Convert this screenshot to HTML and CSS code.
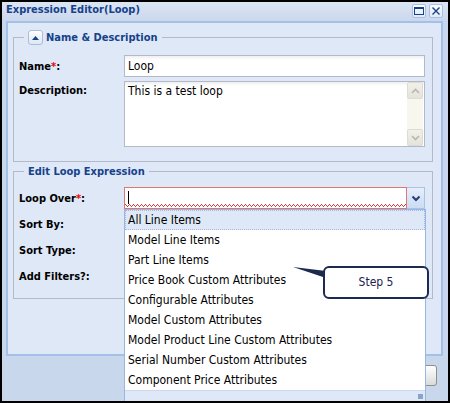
FILE: index.html
```html
<!DOCTYPE html>
<html>
<head>
<meta charset="utf-8">
<link rel="stylesheet" href="styles.css">
</head>
<body>
<div class="win">
  <div class="titlebar">
    <span class="title">Expression Editor(Loop)</span>
    <div class="tools">
      <span class="tool"><svg width="12" height="12" viewBox="0 0 12 12"><rect x="1.5" y="2.5" width="9" height="7" fill="none" stroke="#15428b" stroke-width="1"/><rect x="1" y="2" width="10" height="2" fill="#15428b"/></svg></span>
      <span class="tool"><svg width="12" height="12" viewBox="0 0 12 12"><path d="M2.5 2.5 L9.5 9.5 M9.5 2.5 L2.5 9.5" stroke="#15428b" stroke-width="1.4" fill="none"/></svg></span>
    </div>
  </div>
  <div class="body">
    <fieldset class="fs fs-name">
      <legend class="lg"><span class="collapse"><svg width="9" height="6" viewBox="0 0 9 6"><path d="M4.5 1 L8 5 L1 5 Z" fill="#15428b"/></svg></span><span>Name &amp; Description</span></legend>
      <div class="row">
        <span class="lbl">Name<span class="req">*</span>:</span>
        <div class="input">Loop</div>
      </div>
      <div class="row row-top">
        <span class="lbl lbl-top">Description:</span>
        <div class="textarea">
          <div class="ta-text">This is a test loop</div>
          <div class="sb">
            <span class="sb-btn"><svg width="9" height="6" viewBox="0 0 9 6"><path d="M1 5 L4.5 1.5 L8 5" stroke="#b8b8ae" stroke-width="1.6" fill="none"/></svg></span>
            <span class="sb-btn"><svg width="9" height="6" viewBox="0 0 9 6"><path d="M1 1 L4.5 4.5 L8 1" stroke="#b8b8ae" stroke-width="1.6" fill="none"/></svg></span>
          </div>
        </div>
      </div>
    </fieldset>
    <fieldset class="fs fs-loop">
      <legend class="lg lg-plain">Edit Loop Expression</legend>
      <div class="row">
        <span class="lbl">Loop Over<span class="req">*</span>:</span>
        <div class="combo">
          <div class="combo-input"><span class="caret"></span></div>
          <div class="trigger"><svg width="10" height="7" viewBox="0 0 10 7"><path d="M1.5 1.5 L5 5 L8.5 1.5" stroke="#243f78" stroke-width="2" fill="none"/></svg></div>
          <div class="list">
            <div class="item item-sel">All Line Items</div>
            <div class="item">Model Line Items</div>
            <div class="item">Part Line Items</div>
            <div class="item">Price Book Custom Attributes</div>
            <div class="item">Configurable Attributes</div>
            <div class="item">Model Custom Attributes</div>
            <div class="item">Model Product Line Custom Attributes</div>
            <div class="item">Serial Number Custom Attributes</div>
            <div class="item">Component Price Attributes</div>
            <div class="list-foot"><span class="grip"></span></div>
          </div>
        </div>
      </div>
      <div class="row"><span class="lbl">Sort By:</span></div>
      <div class="row"><span class="lbl">Sort Type:</span></div>
      <div class="row"><span class="lbl">Add Filters?:</span></div>
    </fieldset>
  </div>
  <div class="footer">
    <span class="btn">OK</span>
  </div>
  <svg class="tail" width="34" height="14" viewBox="0 0 34 14"><polygon points="0,1 33,5 33,12" fill="#1d2a50"/></svg>
  <div class="callout">Step 5</div>
</div>
</body>
</html>
```
FILE: styles.css
```css
html, body {
  margin: 0;
  padding: 0;
  background: #fff;
}
body {
  font-family: "DejaVu Sans Condensed", "DejaVu Sans", sans-serif;
  font-stretch: condensed;
  font-size: 12px;
}
.win {
  position: relative;
  box-sizing: border-box;
  width: 450px;
  height: 403px;
  border: 2px solid #000;
  background: #c8d7ec;
  overflow: hidden;
  display: flex;
  flex-direction: column;
}
.titlebar {
  height: 19px;
  flex: none;
  display: flex;
  align-items: flex-start;
  justify-content: space-between;
  padding: 0 5px 0 4px;
  background: linear-gradient(#dbe5f4, #cbd8ec);
}
.title {
  font-weight: bold;
  font-size: 11px;
  line-height: 16px;
  color: #15428b;
}
.tools {
  display: flex;
  gap: 3px;
  margin-top: 2px;
}
.tool {
  box-sizing: border-box;
  width: 14px;
  height: 14px;
  border: 1px solid #a9c0e2;
  border-radius: 2px;
  background: linear-gradient(#fbfdff, #dfe9f7);
  display: flex;
  align-items: center;
  justify-content: center;
}
.body {
  box-sizing: border-box;
  height: 335px;
  flex: none;
  margin: 0 5px 0 4px;
  border: 2px solid #a3c0e8;
  background: #dfe8f6;
  padding-top: 7px;
}
.fs {
  margin: 0 8px 0 5px;
  border: 1px solid #b5b8c8;
  padding: 10px 7px 14px 5px;
  min-width: 0;
  display: flex;
  flex-direction: column;
  gap: 4px;
}
.fs-loop {
  margin-top: 2px;
  padding-top: 8px;
  padding-bottom: 11px;
}
.lg {
  margin-left: 5px;
  padding: 0 4px;
  height: 15px;
  display: flex;
  align-items: center;
  gap: 3px;
  font-weight: bold;
  font-size: 11px;
  color: #15428b;
}
.collapse {
  box-sizing: border-box;
  width: 15px;
  height: 15px;
  border: 1px solid #a8bfd9;
  border-radius: 3px;
  background: linear-gradient(#ffffff, #dde6f3);
  display: flex;
  align-items: center;
  justify-content: center;
}
.row {
  display: flex;
  align-items: center;
  height: 22px;
}
.row-top {
  align-items: flex-start;
  height: auto;
}
.lbl {
  width: 105px;
  flex: none;
  font-weight: bold;
  font-size: 11px;
  color: #000;
}
.lbl-top {
  line-height: 20px;
}
.req {
  color: #e00;
}
.input {
  box-sizing: border-box;
  width: 301px;
  height: 22px;
  border: 1px solid #b5b8c8;
  background: linear-gradient(#efefef, #fff 4px);
  padding-left: 3px;
  line-height: 20px;
  color: #000;
}
.textarea {
  box-sizing: border-box;
  width: 301px;
  height: 66px;
  border: 1px solid #b5b8c8;
  background: linear-gradient(#efefef, #fff 4px);
  display: flex;
}
.ta-text {
  flex: 1;
  padding: 2px 3px;
  line-height: 14px;
}
.sb {
  width: 16px;
  margin-right: 1px;
  background: #f7f7ed;
  display: flex;
  flex-direction: column;
  justify-content: space-between;
}
.sb-btn {
  box-sizing: border-box;
  height: 17px;
  border: 1px solid #dcdcd2;
  border-radius: 2px;
  background: linear-gradient(#f1f1ea, #e4e4dc);
  display: flex;
  align-items: center;
  justify-content: center;
}
.combo {
  position: relative;
  display: flex;
  width: 301px;
  height: 22px;
}
.combo-input {
  position: relative;
  box-sizing: border-box;
  width: 283px;
  height: 22px;
  border: 1px solid #dd7870;
  background: #fff;
}
.combo-input::after {
  content: "";
  position: absolute;
  left: 0;
  right: 0;
  bottom: 1px;
  height: 3px;
  background:
    repeating-linear-gradient(90deg, #e8322c 0 1px, transparent 1px 4px) 0 0 / 100% 1px no-repeat,
    repeating-linear-gradient(90deg, transparent 0 1px, #e8322c 1px 2px, transparent 2px 3px, #e8322c 3px 4px) 0 1px / 100% 1px no-repeat,
    repeating-linear-gradient(90deg, transparent 0 2px, #e8322c 2px 3px, transparent 3px 4px) 0 2px / 100% 1px no-repeat;
}
.caret {
  position: absolute;
  left: 3px;
  top: 3px;
  width: 1px;
  height: 13px;
  background: #000;
}
.trigger {
  box-sizing: border-box;
  width: 18px;
  height: 22px;
  border: 1px solid #a6c3ea;
  border-left: none;
  background: linear-gradient(#e6eefa, #cbdcf4);
  display: flex;
  align-items: center;
  justify-content: center;
}
.list {
  position: absolute;
  z-index: 5;
  top: 22px;
  left: 0;
  box-sizing: border-box;
  width: 302px;
  border: 1px solid #98b6e0;
  background: #fff;
}
.item {
  height: 18px;
  line-height: 18px;
  border: 1px solid transparent;
  padding-left: 2px;
  color: #000;
  white-space: nowrap;
}
.item-sel {
  background: #dfe8f6;
  border: 1px dotted #a3bae9;
}
.list-foot {
  position: relative;
  height: 14px;
  background: #dfe8f6;
  border-top: 1px solid #c9d9ef;
}
.grip {
  position: absolute;
  right: 2px;
  top: 3px;
  width: 5px;
  height: 5px;
  background:
    radial-gradient(circle, #8aa4c8 0.8px, transparent 1px) 0 0 / 2px 2px;
}
.footer {
  flex: 1;
  display: flex;
  justify-content: flex-end;
  align-items: flex-start;
  padding: 9px 11px 0 0;
}
.btn {
  box-sizing: border-box;
  width: 75px;
  height: 21px;
  border: 1px solid #8f8f8f;
  border-radius: 3px;
  background: linear-gradient(#ffffff, #dadada);
  font-size: 11px;
  line-height: 19px;
  text-align: center;
}
.tail {
  position: absolute;
  left: 291px;
  top: 264px;
  z-index: 6;
}
.callout {
  position: absolute;
  z-index: 7;
  left: 321px;
  top: 264px;
  box-sizing: border-box;
  width: 106px;
  height: 33px;
  border: 2px solid #1d2a50;
  border-radius: 6px;
  background: #fff;
  color: #1a2350;
  font-size: 12px;
  line-height: 29px;
  text-align: center;
}
```
